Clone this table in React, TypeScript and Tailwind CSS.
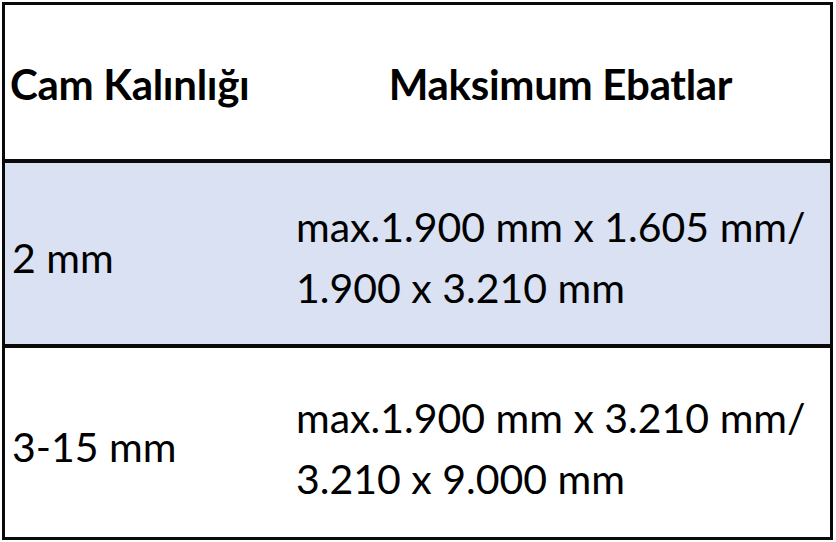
export default function App() {
  const rows = [
    { thickness: '2 mm', sizes: ['max.1.900 mm x 1.605 mm/', '1.900 x 3.210 mm'], bg: 'bg-[#d9e1f2]', pad: 'pt-[6px]' },
    { thickness: '3-15 mm', sizes: ['max.1.900 mm x 3.210 mm/', '3.210 x 9.000 mm'], bg: 'bg-white', pad: 'pt-[10px]' },
  ]

  return (
    <div className="w-[836px] h-[542px] bg-white p-[2px] font-['Lato',sans-serif] text-black">
      <div className="border-[3px] border-[#0a0a0a] h-[538px] w-[831px] flex flex-col">
        {/* header */}
        <div className="h-[158px] flex items-center border-b-[4px] border-[#0a0a0a]">
          <div className="w-[286px] pl-[5px] pt-[4px] text-[42px] font-bold tracking-[-0.3px]">Cam Kalınlığı</div>
          <div className="flex-1 text-center pt-[4px] text-[42px] font-bold tracking-[-0.3px]">Maksimum Ebatlar</div>
        </div>
        {rows.map((row, i) => (
          <div
            key={row.thickness}
            className={`${row.bg} flex items-center ${i === 0 ? 'h-[185px] border-b-[4px] border-[#0a0a0a]' : 'flex-1'}`}
          >
            <div className="w-[286px] pl-[7px] text-[41px] pt-[9px]">{row.thickness}</div>
            <div className={`flex-1 pl-[5px] text-[41px] leading-[61px] ${row.pad}`}>
              {row.sizes.map((s) => (
                <div key={s}>{s}</div>
              ))}
            </div>
          </div>
        ))}
      </div>
    </div>
  )
}
